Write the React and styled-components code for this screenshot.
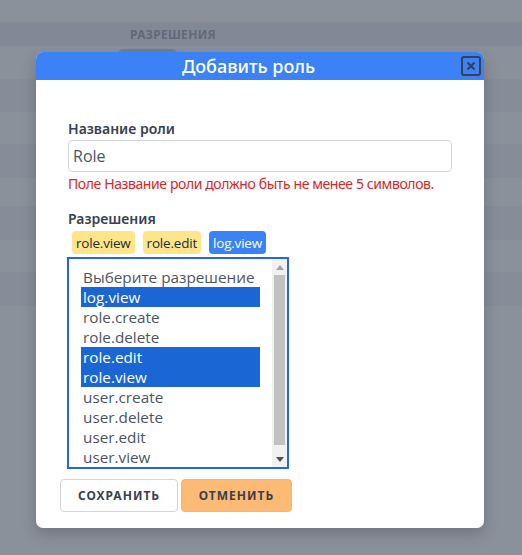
import React from "react";
import styled, { createGlobalStyle } from "styled-components";

const GlobalStyle = createGlobalStyle`
  html, body {
    margin: 0;
    padding: 0;
    background: #ffffff;
    font-family: "Noto Sans", "Open Sans", sans-serif;
  }
`;

const Page = styled.div`
  position: relative;
  width: 522px;
  height: 555px;
  overflow: hidden;
  background: #ffffff;
`;

const Table = styled.div`
  padding-top: 22px;
`;

const HeadRow = styled.div`
  height: 24px;
  background: #cdd7ea;
  display: flex;
  align-items: center;
  padding-left: 130px;
  font-size: 12px;
  font-weight: 700;
  color: #2f3a4a;
  letter-spacing: 0.3px;
`;

const Row = styled.div`
  height: ${(p) => p.h || 33}px;
  background: ${(p) => (p.odd ? "#e6e9ee" : "#ffffff")};
  position: relative;
`;

const Tag = styled.span`
  position: absolute;
  left: 118px;
  top: 3px;
  width: 59px;
  height: 20px;
  border-radius: 5px;
  background: #7fa4e6;
`;

const Overlay = styled.div`
  position: absolute;
  inset: 0;
  background: rgba(110, 117, 130, 0.8);
`;

const Modal = styled.div`
  position: absolute;
  left: 36px;
  top: 52px;
  width: 448px;
  background: #ffffff;
  border-radius: 7px;
  overflow: hidden;
  box-shadow: 0 6px 14px rgba(30, 35, 45, 0.25);
`;

const Header = styled.div`
  height: 28px;
  background: #3b82f6;
  display: flex;
  align-items: center;
  padding-right: 3px;
`;

const Title = styled.h2`
  flex: 1;
  margin: 0;
  text-align: center;
  font-size: 18px;
  font-weight: 500;
  color: #ffffff;
`;

const Close = styled.button`
  width: 20px;
  height: 20px;
  box-sizing: border-box;
  padding: 0;
  border: 2px solid #374151;
  border-radius: 3px;
  background: transparent;
  display: flex;
  align-items: center;
  justify-content: center;
`;

const Body = styled.div`
  padding: 40px 32px 0 32px;
`;

const Label = styled.div`
  font-size: 14px;
  font-weight: 600;
  color: #374151;
  line-height: 18px;
`;

const Input = styled.div`
  margin-top: 2px;
  height: 32px;
  box-sizing: border-box;
  border: 1px solid #d1d5db;
  border-radius: 4px;
  display: flex;
  align-items: center;
  padding-left: 4px;
  font-family: "Open Sans", sans-serif;
  font-size: 16px;
  color: #4b5563;
`;

const Error = styled.div`
  margin-top: 3px;
  font-size: 14px;
  letter-spacing: -0.4px;
  white-space: nowrap;
  color: #dc2626;
  line-height: 18px;
`;

const PermLabel = styled(Label)`
  margin-top: 17px;
`;

const Chips = styled.div`
  display: flex;
  gap: 8px;
  padding-left: 4px;
  margin-top: 3px;
`;

const Chip = styled.span`
  height: 23px;
  padding: 0 4px;
  border-radius: 4px;
  display: inline-flex;
  align-items: center;
  font-family: "Open Sans", sans-serif;
  font-size: 13.5px;
  letter-spacing: -0.2px;
  background: ${(p) => (p.blue ? "#3b82f6" : "#fde68a")};
  color: ${(p) => (p.blue ? "#ffffff" : "#1f2937")};
`;

const List = styled.div`
  margin-top: 3px;
  margin-left: -1px;
  width: 222px;
  height: 212px;
  box-sizing: border-box;
  border: 2px solid #2563eb;
  display: flex;
  overflow: hidden;
`;

const Options = styled.div`
  flex: 1;
  padding: 8px 12px 0 12px;
`;

const Option = styled.div`
  height: 20px;
  line-height: 20px;
  padding-left: 2px;
  font-family: "Open Sans", sans-serif;
  font-size: 15.3px;
  background: ${(p) => (p.selected ? "#1a66d4" : "transparent")};
  color: ${(p) => (p.selected ? "#ffffff" : "#4b5563")};
`;

const Scrollbar = styled.div`
  width: 15px;
  background: #f1f1f1;
  display: flex;
  flex-direction: column;
  align-items: center;
`;

const Arrow = styled.div`
  height: 16px;
  display: flex;
  align-items: center;
  justify-content: center;
`;

const Thumb = styled.div`
  flex: 1;
  width: 11px;
  background: #c1c1c1;
  margin: 0 0 6px;
`;

const Footer = styled.div`
  display: flex;
  gap: 3px;
  padding: 10px 24px 16px 24px;
`;

const Button = styled.button`
  height: 33px;
  width: ${(p) => p.w}px;
  box-sizing: border-box;
  border-radius: 4px;
  border: 1px solid ${(p) => (p.primary ? "#f9b46e" : "#d1d5db")};
  background: ${(p) => (p.primary ? "#fdba74" : "#ffffff")};
  font-family: "Noto Sans", sans-serif;
  font-size: 12px;
  font-weight: 700;
  letter-spacing: 1px;
  color: #374151;
`;

const options = [
  ["Выберите разрешение", false],
  ["log.view", true],
  ["role.create", false],
  ["role.delete", false],
  ["role.edit", true],
  ["role.view", true],
  ["user.create", false],
  ["user.delete", false],
  ["user.edit", false],
  ["user.view", false],
];

const rowHeights = [33, 33, 32, 34, 28, 34, 32, 34, 16];

export default function App() {
  return (
    <Page>
      <GlobalStyle />
      <Table>
        <HeadRow>РАЗРЕШЕНИЯ</HeadRow>
        {rowHeights.map((h, i) => (
          <Row key={i} h={h} odd={i % 2 === 1}>
            {i === 0 && <Tag />}
          </Row>
        ))}
      </Table>
      <Overlay />
      <Modal>
        <Header>
          <Title>Добавить роль</Title>
          <Close>
            <svg width="10" height="10" viewBox="0 0 10 10">
              <path d="M1.5 1.5 L8.5 8.5 M8.5 1.5 L1.5 8.5" stroke="#374151" strokeWidth="2.2" />
            </svg>
          </Close>
        </Header>
        <Body>
          <Label>Название роли</Label>
          <Input>Role</Input>
          <Error>Поле Название роли должно быть не менее 5 символов.</Error>
          <PermLabel>Разрешения</PermLabel>
          <Chips>
            <Chip>role.view</Chip>
            <Chip>role.edit</Chip>
            <Chip blue>log.view</Chip>
          </Chips>
          <List>
            <Options>
              {options.map(([t, s]) => (
                <Option key={t} selected={s}>
                  {t}
                </Option>
              ))}
            </Options>
            <Scrollbar>
              <Arrow>
                <svg width="8" height="5" viewBox="0 0 8 5">
                  <path d="M0 5 L4 0 L8 5 Z" fill="#a3a3a3" />
                </svg>
              </Arrow>
              <Thumb />
              <Arrow>
                <svg width="8" height="5" viewBox="0 0 8 5">
                  <path d="M0 0 L4 5 L8 0 Z" fill="#505050" />
                </svg>
              </Arrow>
            </Scrollbar>
          </List>
        </Body>
        <Footer>
          <Button w={118}>СОХРАНИТЬ</Button>
          <Button w={111} primary>
            ОТМЕНИТЬ
          </Button>
        </Footer>
      </Modal>
    </Page>
  );
}
